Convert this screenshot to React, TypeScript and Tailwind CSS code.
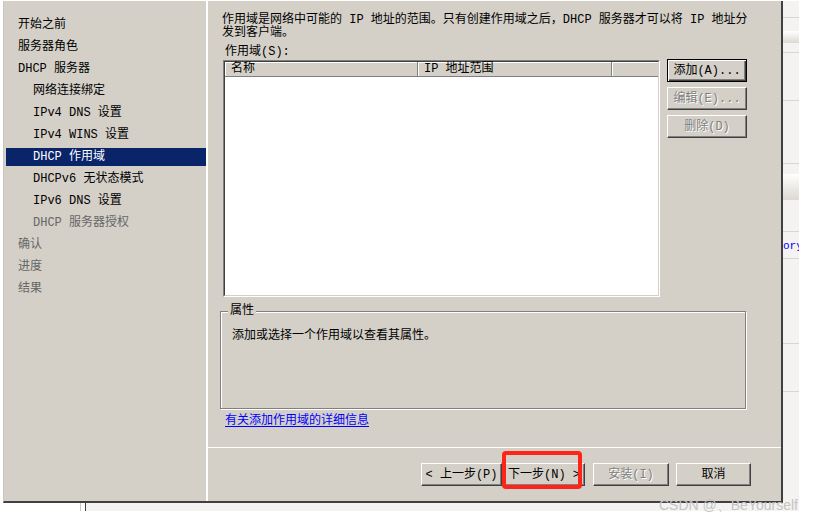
import type { ReactNode } from 'react';

const ui = "[font-family:'Liberation_Mono','Noto_Sans_CJK_SC',monospace] text-[12px]";

const steps = [
  { t: '开始之前', sub: false },
  { t: '服务器角色', sub: false },
  { t: 'DHCP 服务器', sub: false },
  { t: '网络连接绑定', sub: true },
  { t: 'IPv4 DNS 设置', sub: true },
  { t: 'IPv4 WINS 设置', sub: true },
  { t: 'DHCP 作用域', sub: true, active: true },
  { t: 'DHCPv6 无状态模式', sub: true },
  { t: 'IPv6 DNS 设置', sub: true },
  { t: 'DHCP 服务器授权', sub: true, dim: true },
  { t: '确认', sub: false, dim: true },
  { t: '进度', sub: false, dim: true },
  { t: '结果', sub: false, dim: true },
];

function Btn({
  children,
  width,
  disabled,
  isDefault,
}: {
  children: ReactNode;
  width: string;
  disabled?: boolean;
  isDefault?: boolean;
}) {
  const frame = isDefault
    ? 'border border-black shadow-[inset_1px_1px_0_#fff,inset_-1px_-1px_0_#404040,inset_-2px_-2px_0_#808080]'
    : 'border border-t-white border-l-white border-r-[#404040] border-b-[#404040] shadow-[inset_-1px_-1px_0_#808080]';
  const text = disabled ? 'text-[#808080] [text-shadow:1px_1px_0_#fff]' : 'text-black';
  return (
    <div className={`${width} h-[23px] flex items-center justify-center bg-[#d4d0c8] whitespace-nowrap ${frame} ${text}`}>
      {children}
    </div>
  );
}

function Nav() {
  return (
    <div className="w-[204px] h-full border-r-2 border-white pl-[2px] pt-[15px] flex flex-col gap-[4px]">
      {steps.map((s) => (
        <div
          key={s.t}
          className={`h-[18px] leading-[18px] whitespace-nowrap ${s.sub ? 'pl-[27px]' : 'pl-[12px]'} ${
            s.active ? 'bg-[#0a246a] text-white' : s.dim ? 'text-[#666666]' : 'text-black'
          }`}
        >
          {s.t}
        </div>
      ))}
    </div>
  );
}

function ScopeList() {
  return (
    <div className="w-[437px] h-[237px] mt-px border border-[#808080] border-r-white border-b-white">
      <div className="h-full border border-[#404040] border-r-[#d4d0c8] border-b-[#d4d0c8] bg-white">
        <div className="flex h-[15px] leading-[14px]">
          <div className="w-[193px] bg-[#d4d0c8] border-r border-b border-[#808080] shadow-[inset_1px_1px_0_#fff] pl-[6px]">名称</div>
          <div className="w-[194px] bg-[#d4d0c8] border-r border-b border-[#808080] shadow-[inset_1px_1px_0_#fff] pl-[6px]">IP 地址范围</div>
          <div className="flex-1 bg-[#d4d0c8] border-b border-[#808080] shadow-[inset_1px_1px_0_#fff]" />
        </div>
      </div>
    </div>
  );
}

function Content() {
  return (
    <div className="flex-1 h-full flex flex-col">
      <div className="h-[446px] flex flex-col">
        <div className="mt-[13px] pl-[14px] leading-[13px] whitespace-nowrap">
          <div>作用域是网络中可能的 IP 地址的范围。只有创建作用域之后，DHCP 服务器才可以将 IP 地址分</div>
          <div>发到客户端。</div>
        </div>
        <div className="mt-[6px] pl-[17px] leading-[12px]">作用域(S):</div>
        <div className="mt-[1px] ml-[15px] flex gap-[7px]">
          <ScopeList />
          <div className="flex flex-col gap-[5px]">
            <Btn width="w-[80px]" isDefault>添加(A)...</Btn>
            <Btn width="w-[80px]" disabled>编辑(E)...</Btn>
            <Btn width="w-[80px]" disabled>删除(D)</Btn>
          </div>
        </div>
        <fieldset className="mt-[8px] ml-[12px] w-[526px] h-[104px] border border-[#808080] shadow-[inset_1px_1px_0_#fff,1px_1px_0_#fff]">
          <legend className="ml-[7px] px-[2px] leading-[12px] bg-[#d4d0c8]">属性</legend>
          <div className="mt-[13px] pl-[11px] leading-[12px]">添加或选择一个作用域以查看其属性。</div>
        </fieldset>
        <div className="mt-[6px] ml-[17px] leading-[12px]">
          <span className="text-[#0000ff] underline underline-offset-2">有关添加作用域的详细信息</span>
        </div>
      </div>
      <div className="h-px bg-white" />
      <div className="flex-1 pt-[15px] pr-[30px] flex justify-end">
        <Btn width="w-[81px]">&lt; 上一步(P)</Btn>
        <div className="ml-[1px]">
          <Btn width="w-[82px]">下一步(N) &gt;</Btn>
        </div>
        <div className="ml-[8px]">
          <Btn width="w-[76px]" disabled>安装(I)</Btn>
        </div>
        <div className="ml-[7px]">
          <Btn width="w-[75px]">取消</Btn>
        </div>
      </div>
    </div>
  );
}

function SideStrip() {
  return (
    <div className="w-[16px] h-[503px] bg-[#f4f3f1] flex flex-col overflow-hidden">
      <div className="h-[17px] shrink-0 border-b border-[#d8d6d0]" />
      <div className="h-[13px] shrink-0" />
      <div className="h-[12px] shrink-0 bg-gradient-to-b from-white to-[#dcd9d2]" />
      <div className="h-[10px] shrink-0 border-b border-[#d8d6d0]" />
      <div className="h-[48px] shrink-0 border-b border-[#d8d6d0]" />
      <div className="h-[63px] shrink-0 border-b border-[#d8d6d0]" />
      <div className="h-[10px] shrink-0" />
      <div className="h-[26px] shrink-0 bg-gradient-to-b from-white to-[#dcd9d2]" />
      <div className="h-[32px] shrink-0 border-b border-[#d8d6d0]" />
      <div className="h-[27px] shrink-0 border-b border-[#d8d6d0] pt-[8px] text-[11px] leading-[12px] text-[#0000ff] whitespace-nowrap [font-family:'Liberation_Mono',monospace]">
        ory
      </div>
      <div className="h-[85px] shrink-0 border-b border-[#d8d6d0]" />
      <div className="h-[48px] shrink-0 border-b border-[#d8d6d0]" />
    </div>
  );
}

export default function App() {
  return (
    <div className={`relative w-[817px] h-[521px] bg-white overflow-hidden ${ui}`}>
      <div className="flex pt-[1px]">
        <div className="ml-[3px] w-[780px] h-[502px] bg-[#d4d0c8] border-l border-[#c8c6c0] border-r-2 border-b-2 border-r-[#404040] border-b-[#404040] flex">
          <Nav />
          <Content />
        </div>
        <SideStrip />
      </div>
      <div className="flex h-[8px] -mt-[1px]">
        <div className="ml-[80px] w-px bg-[#c8c8c8]" />
        <div className="ml-[4px] w-px bg-[#404040]" />
        <div className="w-[713px] bg-[#f4f3f1]" />
      </div>
      <div className="absolute left-[502px] top-[451px] w-[80px] h-[38px] border-4 border-[#ff2418] rounded-[4px]" />
      <div className="absolute left-[659px] top-[497px] text-[14px] leading-[16px] text-[#c4c4c4] [font-family:'Liberation_Sans',Arial,sans-serif] whitespace-nowrap">
        CSDN @、BeYourself
      </div>
    </div>
  );
}
